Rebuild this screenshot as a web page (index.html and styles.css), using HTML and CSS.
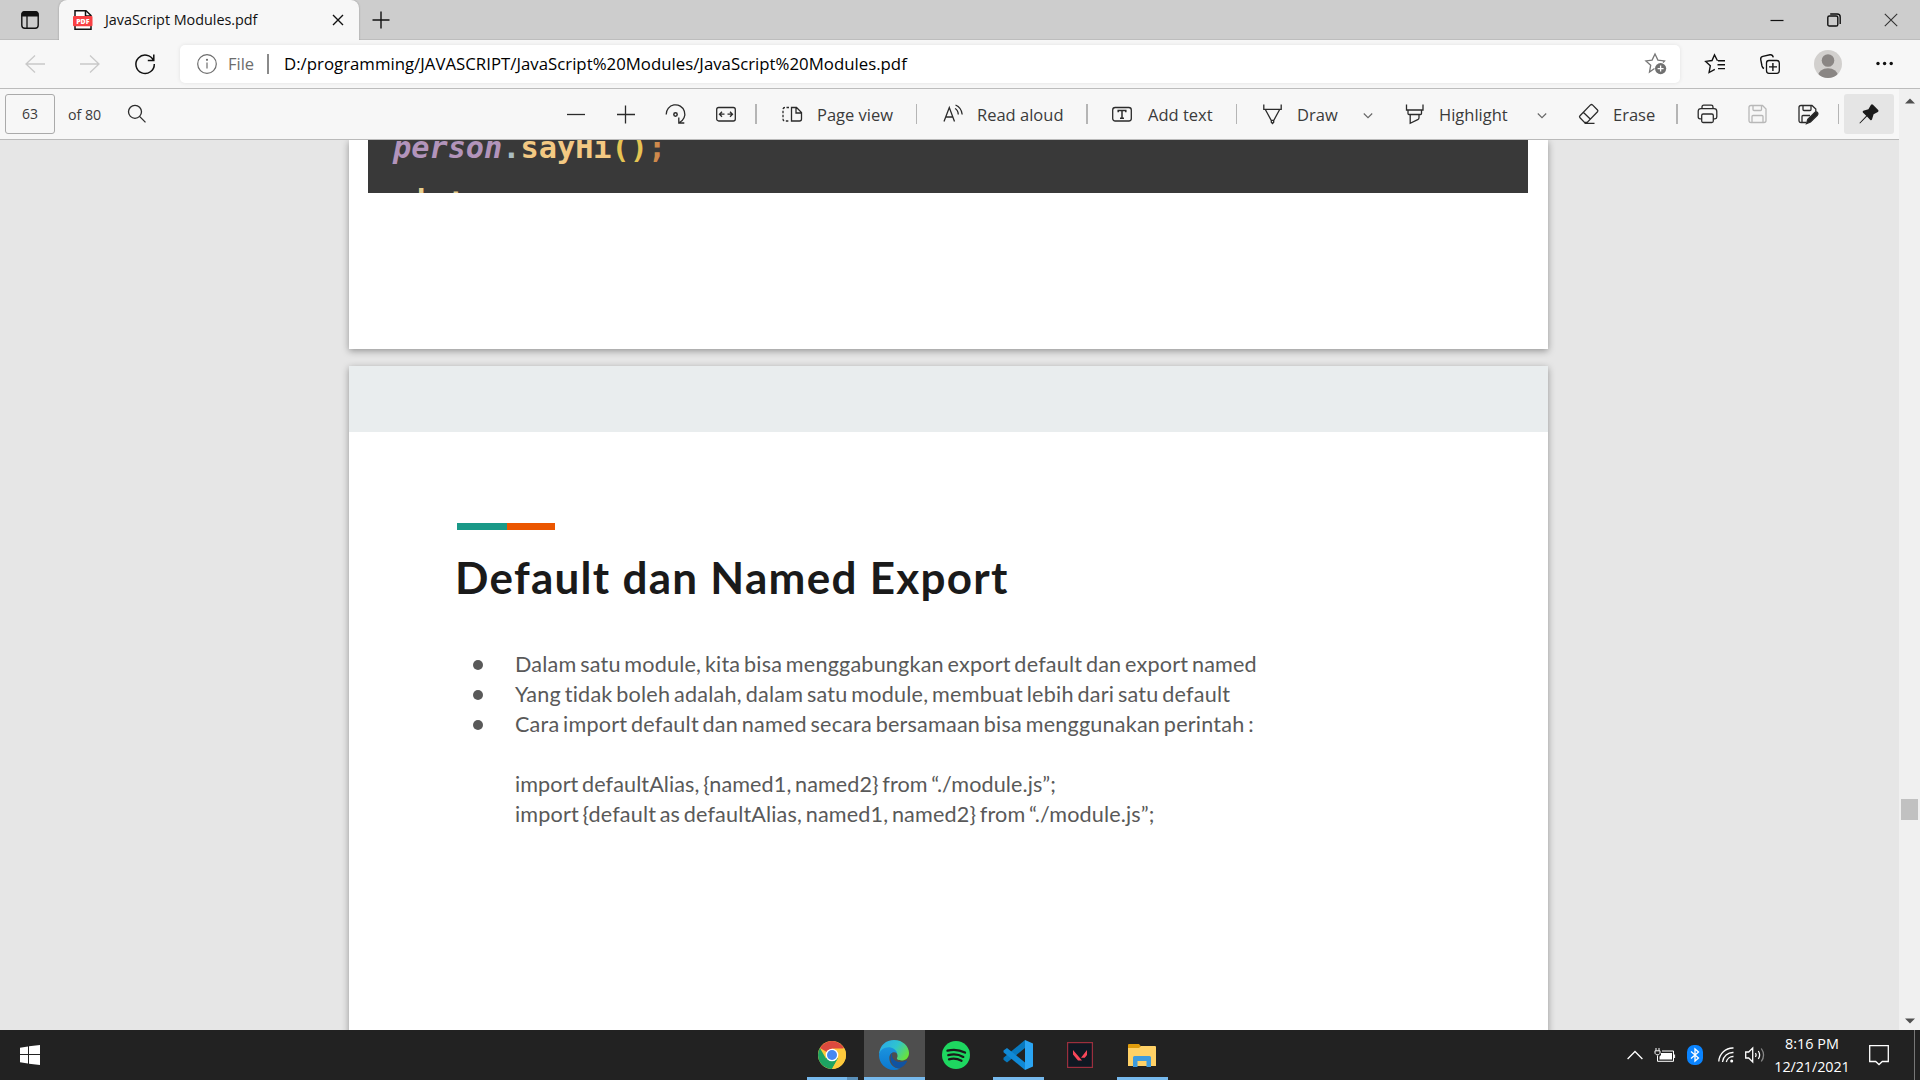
FILE: index.html
```html
<!DOCTYPE html>
<html lang="en">
<head>
<meta charset="utf-8">
<title>JavaScript Modules.pdf</title>
<link rel="stylesheet" href="styles.css">
</head>
<body>
<header class="titlebar">
  <svg class="tab-actions" viewBox="0 0 20 20"><rect x="1.8" y="2" width="16.4" height="16.2" rx="3" fill="none" stroke="#111" stroke-width="1.4"/><path d="M1.5 6.5V4q0-3 3-3h11q3 0 3 3v2.500z" fill="#111"/><path d="M7 6v12" stroke="#111" stroke-width="1.300"/></svg>
  <div class="tab">
    <svg class="pdf-icon" viewBox="0 0 20 20"><path d="M2 .8h11l5 4.700v13.700H2z" fill="#fff" stroke="#111" stroke-width="1.500"/><path d="M12.500 1v5H18" fill="none" stroke="#111" stroke-width="1.500"/><rect x="0" y="6" width="19.500" height="10.300" rx="1" fill="#f94144"/><text x="9.800" y="13.600" text-anchor="middle" class="pdf-label">PDF</text></svg>
    <span class="tab-title">JavaScript Modules.pdf</span>
    <svg class="tab-close" viewBox="0 0 12 12"><path d="M1 1l10 10M11 1L1 11" class="ln-dark"/></svg>
  </div>
  <svg class="new-tab" viewBox="0 0 18 18"><path d="M9 0.500v17M.5 9h17" class="ln-dark"/></svg>
  <div class="window-buttons">
    <svg viewBox="0 0 14 14"><path d="M.5 7.500h13" stroke="#111" stroke-width="1.200"/></svg>
    <svg viewBox="0 0 14 14"><rect x=".8" y="3" width="10" height="10" rx="1.600" class="ln-dark"/><path d="M3.200 1h7q3 0 3 3v7" class="ln-dark"/></svg>
    <svg viewBox="0 0 14 14"><path d="M.8.8l12.400 12.400M13.200.8L.8 13.200" stroke="#333" stroke-width="1.100"/></svg>
  </div>
</header>

<nav class="navbar">
  <svg class="nav-icon dim" viewBox="0 0 20 20"><path d="M20 10H1M10 1.500L1 10l9 8.500"/></svg>
  <svg class="nav-icon dim" viewBox="0 0 20 20"><path d="M0 10h19M10 1.500L19 10l-9 8.500"/></svg>
  <svg class="nav-icon" viewBox="0 0 20 20"><path d="M18.500 6.500A9.200 9.200 0 1 0 19.300 10M18.800.5v6h-6" stroke-width="1.500"/></svg>
  <div class="address">
    <svg class="info" viewBox="0 0 20 20"><circle cx="10" cy="10" r="9.300"/><path d="M10 8.500v6"/><circle cx="10" cy="5.800" r=".5"/></svg>
    <span class="scheme">File</span>
    <i class="address-sep"></i>
    <span class="url">D:/programming/JAVASCRIPT/JavaScript%20Modules/JavaScript%20Modules.pdf</span>
    <svg class="star-add" viewBox="0 0 22 22"><path d="M9.500 15.500L4.500 19l1.200-6.800L.9 7.900l6.200-.8L10 1l2.900 6.100 6.600.8-1.500 1.600" fill="none" stroke="#777" stroke-width="1.300"/><circle cx="15.600" cy="15.600" r="5.600" fill="#707070"/><path d="M15.600 12.600v6M12.600 15.600h6" stroke="#fff" stroke-width="1.300"/></svg>
  </div>
  <svg class="nav-icon fav" viewBox="0 0 20 20"><path d="M12.500 6.700L9.500.9 7 6.500l-6.300.9 4.600 4.400-1.200 6.700 5.700-3.100M13 6.800h7M12.500 10.700H20M13 14.600h7" stroke-width="1.400"/></svg>
  <svg class="nav-icon coll" viewBox="0 0 20 20"><rect x="6.500" y="6.500" width="12.800" height="12.800" rx="2.500"/><path d="M12.900 9v8M9 12.900h8M4 14.500Q2.500 14 2 12L.7 5.500Q.4 3 2.800 2.400L10 .8q2.500-.4 3.300 2.600" stroke-width="1.400"/></svg>
  <svg class="avatar" viewBox="0 0 28 28"><defs><clipPath id="avatar-clip"><circle cx="14" cy="14" r="14"/></clipPath></defs><circle cx="14" cy="14" r="14" fill="#d2d0ce"/><g clip-path="url(#avatar-clip)" fill="#8a8684"><circle cx="14" cy="10.500" r="6.300"/><ellipse cx="14" cy="26" rx="10" ry="7.800"/></g></svg>
  <svg class="dots" viewBox="0 0 18 20"><circle cx="2" cy="9.500" r="1.700"/><circle cx="8.600" cy="9.500" r="1.700"/><circle cx="15.200" cy="9.500" r="1.700"/></svg>
</nav>

<main class="viewer">
  <section class="viewport">
    <div class="toolbar">
      <div class="page-input">63</div>
      <span class="label of">of 80</span>
      <svg class="ic search" viewBox="0 0 20 20"><circle cx="8" cy="7.800" r="6.500"/><path d="M12.800 12.600l5.700 5.800"/></svg>
      <svg class="ic minus" viewBox="0 0 20 20"><path d="M1 10.500h18"/></svg>
      <svg class="ic plus" viewBox="0 0 20 20"><path d="M1 10.500h18M9.500 1.500v18"/></svg>
      <svg class="ic rotate" viewBox="0 0 20 20"><path d="M.7 10.500A9.300 9.300 0 1 1 14 18.500M13.300 13.500v5.500h5.500"/><circle cx="10" cy="10.500" r="1.700" stroke-width="1.500"/></svg>
      <svg class="ic fit" viewBox="0 0 20 20"><rect x=".7" y="3.500" width="18.600" height="13.500" rx="2"/><path d="M8.500 10.200H3.500M6 7.700l-2.500 2.500L6 12.700M11.500 10.200h5M14 7.700l2.500 2.500-2.500 2.500"/></svg>
      <i class="sep thick s1"></i>
      <svg class="ic pv" viewBox="0 0 20 20"><path d="M9.500 3.500h5l5 5V15q0 2-2 2h-8zM14 3.800V9h5.200"/><path d="M7 3.500H3q-2 0-2 2V15q0 2 2 2h4" stroke-dasharray="2.500 1.500"/></svg>
      <span class="label t-pv">Page view</span>
      <i class="sep s2"></i>
      <svg class="ic ra" viewBox="0 0 20 20"><path d="M1 17.500L6.300 3.500 11.500 17.500M2.700 13h7.200M12 4.500q3 1.500 3.300 6M12.500 1q6 2.500 6.700 9.500"/></svg>
      <span class="label t-ra">Read aloud</span>
      <i class="sep thick s3"></i>
      <svg class="ic at" viewBox="0 0 20 20"><rect x=".7" y="3.500" width="18.600" height="13.500" rx="2.500"/><path d="M6.200 8.200V6.500h7.600v1.700M10 6.500v7.800M8 14.300h4" stroke-width="1.500"/></svg>
      <span class="label t-at">Add text</span>
      <i class="sep s4"></i>
      <svg class="ic dr" viewBox="0 0 20 20"><path d="M.8.5v4.800h17.400V.5M2.200 5.300l6 11h2.600l6-11M8.300 16v2.200l1.200 1.300 1.200-1.300V16"/></svg>
      <span class="label t-dr">Draw</span>
      <svg class="chev c1" viewBox="0 0 10 10"><path d="M.8 3.500L5 7.700l4.200-4.200"/></svg>
      <svg class="ic hl" viewBox="0 0 20 20"><path d="M1.500.5v5.500h16.500V.5M3 6v3.500q0 1 1 1h11.500q1 0 1-1V6M5.200 10.500v8.800l7.500-3.600q1.300-.7 1.300-2v-3.200"/></svg>
      <span class="label t-hl">Highlight</span>
      <svg class="chev c2" viewBox="0 0 10 10"><path d="M.8 3.500L5 7.700l4.200-4.200"/></svg>
      <svg class="ic er" viewBox="0 0 20 20"><path d="M12 .9L1.500 11.700q-1 1 0 2L6 18.400h2.700L19 7.800q.8-.9 0-1.800L14 .9q-1-.8-2 0zM5 8.500l7 6.700M6 19.400h10"/></svg>
      <span class="label t-er">Erase</span>
      <i class="sep thick s5"></i>
      <svg class="ic pr" viewBox="0 0 20 20"><path d="M4.500 4.500V3q0-1.800 1.800-1.800h7.400q1.800 0 1.800 1.800v1.500M4 14.800H2.500q-1.800 0-1.800-1.800V7.500q0-2.800 2.800-2.800h13q2.800 0 2.800 2.800V13q0 1.800-1.800 1.800H16"/><rect x="4.200" y="10" width="11.600" height="8.500" rx="1.500"/></svg>
      <svg class="ic sv" viewBox="0 0 20 20"><path d="M3 1.500h11.500L18 5v11.500q0 2-2 2H3q-2 0-2-2v-13q0-2 2-2zM5 1.500v4q0 1 1 1h6.500q1 0 1-1v-4M4 18.500v-6q0-1 1-1h9q1 0 1 1v6"/></svg>
      <svg class="ic sa" viewBox="0 0 20 20"><path d="M8 18.500H3q-2 0-2-2v-13q0-2 2-2h11L17.800 5v3M5 1.500v4q0 1 1 1h6q1 0 1-1v-4M4 18.500v-6q0-1 1-1h7"/><path d="M17 8.300q1.600-.9 2.600.3.900 1.400-.3 2.600L12.500 18l-4 1.600 1.300-4.200z" fill="#222"/></svg>
      <i class="sep s6"></i>
      <div class="pin"><svg viewBox="0 0 20 20"><path d="M12 .8q1-.9 2 0l5.200 5.200q.9 1.200-.3 2L14.600 10.300 13 15.500q-.7 1.300-1.700.4L8 12.600 1 19.500.4 19l6.800-7.200-3.300-3.300q-.7-1 .4-1.700L9.400 5.200z" fill="#1b1b1b"/></svg></div>
    </div>
    <div class="canvas">
      <article class="sheet sheet-top">
        <div class="code"><div class="code-line"><em>person</em><b class="dot">.</b><b class="fn">sayHi</b><b class="par">()</b><b class="semi">;</b></div><div class="code-line next">print</div></div>
      </article>
      <article class="sheet sheet-main">
        <div class="band"></div>
        <div class="slide">
          <div class="accent"></div>
          <h1>Default dan Named Export</h1>
          <ul>
            <li><span class="l1">Dalam satu module, kita bisa menggabungkan export default dan export named</span></li>
            <li><span class="l2">Yang tidak boleh adalah, dalam satu module, membuat lebih dari satu default</span></li>
            <li><span class="l3">Cara import default dan named secara bersamaan bisa menggunakan perintah :</span></li>
          </ul>
          <p><span class="l4">import defaultAlias, {named1, named2} from “./module.js”;</span><br><span class="l5">import {default as defaultAlias, named1, named2} from “./module.js”;</span></p>
        </div>
      </article>
    </div>
  </section>
  <aside class="scrollbar">
    <svg viewBox="0 0 10 6"><path d="M0 5.500L5 .5l5 5z"/></svg>
    <div class="thumb"></div>
    <svg viewBox="0 0 10 6"><path d="M0 .5l5 5 5-5z"/></svg>
  </aside>
</main>

<footer class="taskbar">
  <svg class="start" viewBox="0 0 20 20"><path d="M0 2.800L8 1.500V9H0zM9 1.300L20 0v9H9zM0 10h8v8.500l-8-1.200zM9 10h11v10L9 18.700z" fill="#fff"/></svg>
  <div class="apps">
    <div class="app run more"><svg viewBox="0 0 28 28"><circle cx="14" cy="14" r="14" fill="#fdc93c"/><path d="M14 14L1.900 7A14 14 0 0 1 26.100 7z" fill="#dc4a3e"/><path d="M1.900 7A14 14 0 0 0 14 28l6-10.500L14 14 8 17.500z" fill="#1da362"/><path d="M14 7.500h12.400A14 14 0 0 1 14 28l6-10.500z" fill="#fdc93c"/><circle cx="14" cy="14" r="6.300" fill="#fff"/><circle cx="14" cy="14" r="5" fill="#4688f1"/></svg></div>
    <div class="app run active"><svg class="edge" viewBox="0 0 30 30"><defs><linearGradient id="edge-top" x1="0" x2="1" y1=".2" y2=".7"><stop offset="0" stop-color="#2aa9ea"/><stop offset=".5" stop-color="#2fc4cf"/><stop offset="1" stop-color="#6be336"/></linearGradient><linearGradient id="edge-body" x1="0" x2="0" y1="0" y2="1"><stop offset="0" stop-color="#1b93de"/><stop offset="1" stop-color="#0b78d0"/></linearGradient></defs><path d="M0 14C1 5 7 0 15 0c9 0 15 6.500 15 13 0 5-3.500 7.500-7.500 7.500-3 0-5-1.200-4.500-2.400 1-1.600.8-4.600-1.500-6.600C12 7.500 4 9 0 14z" fill="url(#edge-top)"/><path d="M0 15C.5 10 5 7.200 9.500 7.200c4 0 8 2.600 8.800 6.300-3.500-3-8-.5-8 4.500 0 6.500 5 11 11 10.500Q18 30 15 30C6 30 0 23 0 15z" fill="url(#edge-body)"/><path d="M13.500 12.300C10 16 10.500 26 20 28.500c3.500-1.300 6.500-4 8-7 .3-.8-.4-1-1-.7C19 24.500 11 20 13.500 12.300z" fill="#1053a2"/></svg></div>
    <div class="app"><svg viewBox="0 0 28 28"><circle cx="14" cy="14" r="14" fill="#1ed760"/><path d="M5.500 9.700q9-2.500 17.500 1.900M6.300 14.200q8-2.200 15 1.700M7 18.300q6.500-1.800 12.500 1.500" fill="none" stroke="#1a1a1a" stroke-width="2.300" stroke-linecap="round"/></svg></div>
    <div class="app run"><svg class="code-app" viewBox="0 0 30 30"><path d="M22 0v8L4 22.500l-3.500-2.800v-2z" fill="#0879bf"/><path d="M.5 10.500L4 8l18 14.500V30L.5 12.300z" fill="#1089d6"/><path d="M22 0l8 3.500v23L22 30z" fill="#2ba5f3"/></svg></div>
    <div class="app"><svg class="valorant" viewBox="0 0 26 26"><rect x=".6" y=".6" width="24.800" height="24.800" fill="#0f1822" stroke="#9b2f3d" stroke-width="1.200"/><path d="M6 8l9 10.500h-4L6 12.500zM20 8v5l-2.200 2.700H14z" fill="#f8475a"/></svg></div>
    <div class="app run"><svg viewBox="0 0 28 24"><path d="M0 2q0-1 1-1h10l2 2.500V8H0z" fill="#e09c0c"/><path d="M0 5h11l2-2h14q1 0 1 1v19H0z" fill="#ffd166"/><path d="M5 24V14.500q0-1.500 1.500-1.500h15q1.500 0 1.500 1.500V24h-4.500v-6h-9v6z" fill="#3e9bdd"/></svg></div>
  </div>
  <div class="tray">
    <svg class="up" viewBox="0 0 16 10"><path d="M.6 9L8 1.500 15.400 9"/></svg>
    <svg class="battery" viewBox="0 0 20 14"><path d="M6 5h11v6.500H4.500V8.500L6 7z" fill="#fff" stroke="none"/><path d="M7 3h11.500v10.300H2.500V7.500M19.600 6.500v3.500M1 0v2.500M4 0v2.500M0 2.800h5v2.500L3.500 6.800h-2L0 5.300z" stroke-width="1"/></svg>
    <svg class="bluetooth" viewBox="0 0 16 20"><rect width="16" height="20" rx="7" fill="#0a84ff" stroke="none"/><path d="M4 6.500l7.500 6.500L8 16V4l3.500 3L4 13.500"/></svg>
    <svg class="wifi" viewBox="0 0 16 16"><circle cx="13.700" cy="14" r="1.500" fill="#fff" stroke="none"/><path d="M.8 14.500A14 14 0 0 1 15.500 1M4.500 15a10.500 10.500 0 0 1 11-9.500M8.300 15a7 7 0 0 1 7.200-5.500"/></svg>
    <svg class="sound" viewBox="0 0 20 16"><path d="M.7 5h3l4-4v14l-4-4h-3zM10.500 6q1.300 2 0 4M13.300 4q2.700 4 0 8"/><path d="M16.300 1.500q4.500 6.500 0 13" stroke="#888"/></svg>
    <div class="clock"><span>8:16 PM</span><span class="date">12/21/2021</span></div>
    <svg class="notice" viewBox="0 0 20 20"><path d="M.7.7h18.600v15.800h-6L10 19.500l-3.300-3h-6z"/></svg>
  </div>
</footer>
</body>
</html>
```
FILE: styles.css
```css
* { box-sizing: border-box; }
body {
  margin: 0;
  width: 1920px;
  height: 1080px;
  overflow: hidden;
  display: flex;
  flex-direction: column;
  font-family: "Open Sans", "Noto Sans", sans-serif;
  color: #111;
  background: #e6e6e6;
}
svg { display: block; flex: none; fill: none; overflow: visible; }
span { white-space: nowrap; }
.ln-dark { fill: none; stroke: #111; stroke-width: 1.4; }

/* Title bar */
.titlebar {
  height: 40px;
  flex: none;
  display: flex;
  align-items: center;
  background: #cdcdcd;
  box-shadow: inset 0 -1px #bdbdbd;
}
.tab-actions { width: 20px; height: 20px; margin-left: 20px; }
.tab {
  width: 300px;
  height: 40px;
  margin-left: 19px;
  padding: 0 15px 0 14px;
  display: flex;
  align-items: center;
  background: #f7f7f7;
  border-radius: 8px 8px 0 0;
  box-shadow: 0 0 2px rgba(0, 0, 0, .3);
  clip-path: inset(0 -3px 0 -3px);
}
.pdf-icon { width: 20px; height: 20px; }
.pdf-label { font: 800 7px "Open Sans", sans-serif; fill: #fff; }
.tab-title { margin-left: 12px; width: 155px; font-size: 14.4px; letter-spacing: -.03px; line-height: 40px; height: 40px; }
.tab-close { width: 12px; height: 12px; margin-left: auto; }
.new-tab { width: 18px; height: 18px; margin-left: 13px; }
.window-buttons { margin-left: auto; margin-right: 22px; display: flex; gap: 43px; }
.window-buttons svg { width: 14px; height: 14px; }

/* Navigation bar */
.navbar {
  height: 49px;
  flex: none;
  display: flex;
  align-items: center;
  padding: 0 26px 1px 25px;
  background: #f7f7f7;
  border-bottom: 1px solid #bcbcbc;
}
.nav-icon { width: 20px; height: 20px; stroke: #111; stroke-width: 1.3; margin-right: 35px; }
.nav-icon.dim { stroke: #c9c9c9; }
.address {
  flex: 1;
  height: 38px;
  margin-left: -10px;
  padding: 0 13px 0 17px;
  display: flex;
  align-items: center;
  background: #fff;
  border-radius: 5px;
  box-shadow: 0 0 4px rgba(0, 0, 0, .09);
}
.info { width: 20px; height: 20px; stroke: #6d6d6d; stroke-width: 1.2; }
.scheme { width: 27px; margin-left: 11px; font-size: 16.5px; color: #6d6d6d; }
.address-sep { width: 2px; height: 20px; margin-left: 12px; background: #8a8a8a; }
.url { margin-left: 15px; font-size: 16.8px; letter-spacing: .01px; color: #000; }
.star-add { width: 22px; height: 22px; margin-left: auto; }
.fav { margin-left: 25px; }
.coll { margin-right: 34px; }
.avatar { width: 28px; height: 28px; }
.dots { width: 18px; height: 20px; margin-left: 34px; fill: #111; }

/* PDF toolbar */
.viewer { flex: 1; min-height: 0; display: flex; }
.viewport { width: 1899px; display: flex; flex-direction: column; }
.toolbar {
  height: 51px;
  flex: none;
  display: flex;
  align-items: center;
  background: #f7f7f7;
  border-bottom: 1px solid #bababa;
}
.page-input {
  width: 50px;
  height: 40px;
  margin-left: 5px;
  border: 1px solid #aaa;
  border-radius: 3px;
  text-align: center;
  line-height: 38px;
  font-size: 14px;
  color: #3b3b3b;
}
.label { font-size: 16.5px; color: #3b3b3b; flex: none; }
.ic { width: 20px; height: 20px; stroke: #2b2b2b; stroke-width: 1.3; }
.chev { width: 10px; height: 10px; stroke: #666; stroke-width: 1.1; position: relative; top: 1px; }
.sep { width: 1px; height: 20px; background: #b5b5b5; flex: none; }
.sep.thick { width: 2px; }
.of { margin-left: 13px; width: 33px; font-size: 14.2px; }
.search { margin-left: 26px; }
.minus { margin-left: 419px; }
.plus { margin-left: 30px; }
.rotate { margin-left: 29px; width: 21px; }
.fit { margin-left: 30px; }
.s1 { margin-left: 19px; }
.pv { margin-left: 25px; }
.t-pv { margin-left: 15px; width: 77px; }
.s2 { margin-left: 22px; }
.ra { margin-left: 26px; }
.t-ra { margin-left: 14px; width: 86px; }
.s3 { margin-left: 23px; }
.at { margin-left: 24px; }
.t-at { margin-left: 16px; width: 65px; }
.s4 { margin-left: 23px; }
.dr { margin-left: 26px; }
.t-dr { margin-left: 14px; width: 40px; }
.c1 { margin-left: 26px; }
.hl { margin-left: 32px; }
.t-hl { margin-left: 14px; width: 72px; }
.c2 { margin-left: 26px; }
.er { margin-left: 31px; width: 21px; }
.t-er { margin-left: 14px; width: 41px; }
.s5 { margin-left: 22px; }
.pr { margin-left: 19px; width: 21px; }
.sv { margin-left: 30px; stroke: #b8b8b8; }
.sa { margin-left: 30px; }
.s6 { margin-left: 20px; }
.pin {
  width: 50px;
  height: 40px;
  margin-left: 5px;
  display: grid;
  place-items: center;
  background: #e5e5e5;
  border-radius: 3px;
}
.pin svg { width: 20px; height: 20px; }

/* Document */
.canvas {
  flex: 1;
  min-height: 0;
  overflow: hidden;
  display: flex;
  flex-direction: column;
  padding-left: 349px;
  gap: 17px;
}
.sheet { width: 1199px; flex: none; background: #fff; box-shadow: 0 2px 7px rgba(0, 0, 0, .36); }
.sheet-top { height: 209px; padding: 0 20px 0 19px; }
.code {
  height: 53px;
  overflow: hidden;
  background: #393939;
  padding-left: 25px;
  font: bold 30.25px/42px "DejaVu Sans Mono", monospace;
}
.code-line { height: 42px; margin-top: -13px; white-space: pre; }
.code-line.next { margin: 13px 0 0 -18px; color: #e8cf8d; }
.code em { color: #b294bb; }
.code .dot { color: #a9bcc0; }
.code .fn { color: #f3c983; }
.code .par { color: #e5c453; }
.code .semi { color: #cf8a4c; }
.sheet-main { height: 675px; }
.band { height: 66px; background: #e9edee; }
.slide { padding: 91px 0 0 108px; }
.accent { width: 98px; height: 7px; background: linear-gradient(90deg, #1a9988 50px, #eb5600 50px); }
h1 {
  margin: 13px 0 0 -2px;
  font: 700 44px/68px Lato, sans-serif;
  letter-spacing: 1.28px;
  color: #1a1a1a;
  white-space: nowrap;
}
ul, p { margin: 0; font: 400 21.6px/30px Lato, sans-serif; word-spacing: -2px; color: #595959; }
ul { list-style: none; padding: 38px 0 0 16px; }
li { display: flex; align-items: center; gap: 32px; }
li::before { content: ""; width: 10px; height: 10px; margin-top: 2px; border-radius: 50%; background: #595959; }
p { padding: 30px 0 0 58px; }
.l1 { letter-spacing: .19px; }
.l2 { letter-spacing: .22px; }
.l3 { letter-spacing: .2px; }
.l4 { letter-spacing: .09px; }
.l5 { letter-spacing: .15px; }

.scrollbar {
  width: 21px;
  background: #f0f0f0;
  display: flex;
  flex-direction: column;
  align-items: center;
  padding: 9px 0 6px;
}
.scrollbar svg { width: 10px; height: 6px; fill: #505050; }
.thumb { width: 17px; height: 21px; margin: 695px 0 auto; background: #c1c1c1; }

/* Taskbar */
.taskbar { height: 50px; flex: none; display: flex; align-items: center; background: #222; }
.start { width: 20px; height: 20px; margin-left: 20px; }
.apps { display: flex; align-self: stretch; gap: 1px; margin-left: 762px; }
.app { width: 61px; display: grid; place-items: center; position: relative; }
.app svg { width: 28px; height: 28px; margin-left: -2px; }
.app svg.edge, .app svg.code-app { width: 30px; height: 30px; }
.app svg.valorant { width: 26px; height: 26px; }
.app.run::after {
  content: "";
  position: absolute;
  left: 5px;
  right: 5px;
  bottom: 0;
  height: 3px;
  background: #76b9ed;
}
.app.active { background: #4e4e4e; }
.app.active::after { left: 0; right: 0; }
.app.more::after { background: linear-gradient(90deg, #76b9ed 40px, #5a8fb8 40px); }
.tray { margin-left: auto; display: flex; align-items: center; align-self: stretch; padding-right: 25px; border-right: 1px solid #777; margin-right: 5px; }
.tray svg { stroke: #fff; stroke-width: 1.3; }
.up { width: 16px; height: 10px; }
.battery { width: 20px; height: 14px; margin-left: 12px; }
.tray .bluetooth { width: 16px; height: 20px; margin-left: 12px; }
.wifi { width: 16px; height: 16px; margin-left: 15px; }
.sound { width: 20px; height: 16px; margin-left: 11px; }
.clock { width: 82px; margin: 0 16px 0 6px; display: flex; flex-direction: column; align-items: center; color: #fff; font-size: 14.4px; line-height: 23px; }
.date { letter-spacing: -.1px; }
.notice { width: 20px; height: 20px; }
```
